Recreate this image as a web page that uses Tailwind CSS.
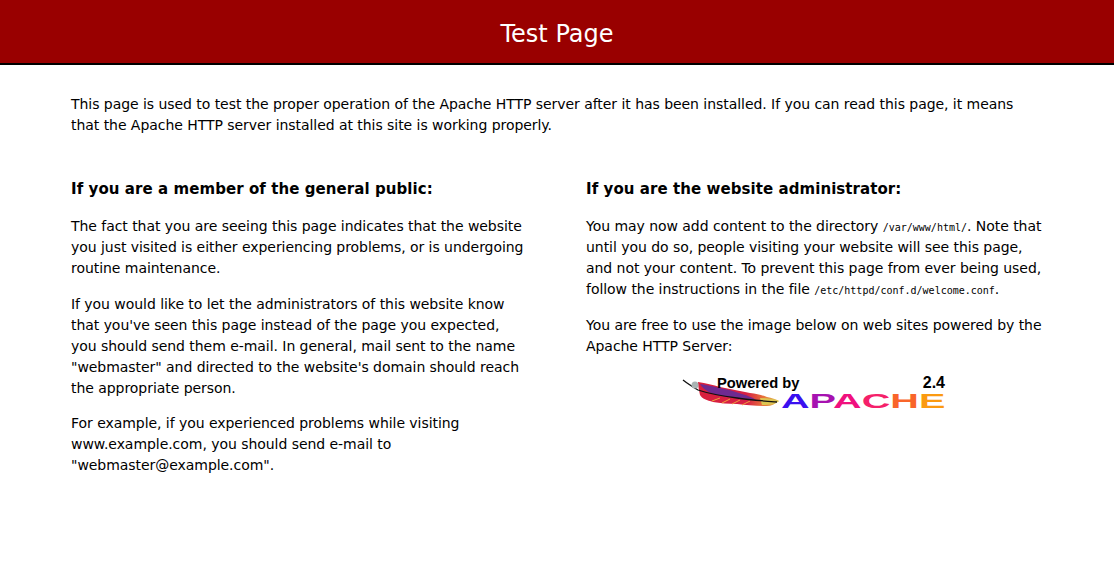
<!DOCTYPE html>
<html lang="en">

<head>
    <meta charset="UTF-8">
    <title>Test Page for the Apache HTTP Server</title>
    <script src="https://cdn.jsdelivr.net/npm/@tailwindcss/browser@4"></script>
</head>

<body class="bg-white text-black font-['DejaVu_Sans',sans-serif] text-[14px] leading-[21px] tracking-[-0.05px]">
    <!--Header-->
    <div class="h-[65px] bg-[#990000] border-b-2 border-black flex justify-center items-center">
        <h1 class="text-white text-[24px] font-normal pt-[5px] tracking-normal">Test Page</h1>
    </div>

    <div class="w-[972px] ml-[71px]">
        <p class="pt-[29px]">This page is used to test the proper operation of the Apache HTTP server after it has been installed. If you can read this page, it means that the Apache HTTP server installed at this site is working properly.</p>

        <div class="grid grid-cols-2 gap-x-[58px] pt-[42px]">
            <!--Left column-->
            <div class="flex flex-col gap-[15px]">
                <h2 class="font-bold text-[15px] leading-[22px] tracking-[0.07px] mb-[1px]">If you are a member of the general public:</h2>
                <p>The fact that you are seeing this page indicates that the website you just visited is either experiencing problems, or is undergoing routine maintenance.</p>
                <p>If you would like to let the administrators of this website know that you've seen this page instead of the page you expected, you should send them e-mail. In general, mail sent to the name "webmaster" and directed to the website's domain should reach the appropriate person.</p>
                <p class="-mt-[1px]">For example, if you experienced problems while visiting www.example.com, you should send e-mail to "webmaster@example.com".</p>
            </div>

            <!--Right column-->
            <div class="flex flex-col gap-[15px]">
                <h2 class="font-bold text-[15px] leading-[22px] tracking-[0.07px] mb-[1px]">If you are the website administrator:</h2>
                <p>You may now add content to the directory <code class="font-['DejaVu_Sans_Mono',monospace] text-[10px] leading-none tracking-normal">/var/www/html/</code>. Note that until you do so, people visiting your website will see this page, and not your content. To prevent this page from ever being used, follow the instructions in the file <code class="font-['DejaVu_Sans_Mono',monospace] text-[10px] leading-none tracking-normal">/etc/httpd/conf.d/welcome.conf</code>.</p>
                <p>You are free to use the image below on web sites powered by the Apache HTTP Server:</p>

                <!--Powered by Apache logo-->
                <div class="relative w-[263px] h-[34px] ml-[96px] mt-[4px] font-['Liberation_Sans',sans-serif] font-bold tracking-normal">
                    <svg class="absolute left-0 top-0" width="98" height="34" viewBox="0 0 98 34">
                        <defs>
                            <linearGradient id="quill" x1="0" y1="0" x2="1" y2="0">
                                <stop offset="0" stop-color="#d8203c"/>
                                <stop offset="0.6" stop-color="#d61f45"/>
                                <stop offset="0.8" stop-color="#e8703a"/>
                                <stop offset="1" stop-color="#e0c850"/>
                            </linearGradient>
                        </defs>
                        <path d="M16 6 C24 7 31 9 38 11 C48 13 58 15 68 17 C75 18 80 19 85 21 C90 22 94 23 97 25 C93 28 89 30 85 30 C74 30 64 29 55 28 C46 28 38 27 31 26 C25 24 20 23 18 19 C17 14 16 10 16 6Z" fill="url(#quill)"/>
                        <path d="M18 8 C30 10 46 13 60 18 C66 20 70 21 74 24 C62 22 50 22 40 20 C30 18 22 15 18 8Z" fill="#6e2a90"/>
                        <path d="M78 22 C84 22 92 23 97 25 C93 28 88 29 80 29 Z" fill="#dcc552"/>
                        <path d="M30 25 L38 22 M40 27 L48 23 M50 28 L58 24 M60 29 L68 25" stroke="#f2a03c" stroke-width="1" fill="none"/>
                        <path d="M1 4 C6 8 11 11 16 14 C28 18 40 20 55 22 C68 24 82 25 95 26" fill="none" stroke="#111" stroke-width="1.3"/>
                        <circle cx="13" cy="9" r="3.5" fill="#a9b3b3"/>
                    </svg>
                    <span class="absolute left-[35px] -top-[1px] text-[14.7px] leading-[16px]">Powered by</span>
                    <span class="absolute right-0 -top-[1px] text-[16px] leading-[16px]">2.4</span>
                    <div class="absolute left-[99px] top-[16px] origin-left scale-x-[2.03] text-[19.5px] leading-[18px] whitespace-nowrap"><span class="text-[#3a10f0]">A</span><span class="text-[#a612b0]">P</span><span class="text-[#f0107e]">A</span><span class="text-[#f5206a]">C</span><span class="text-[#f9652a]">H</span><span class="text-[#fb9a10]">E</span></div>
                </div>
            </div>
        </div>
    </div>
</body>

</html>
